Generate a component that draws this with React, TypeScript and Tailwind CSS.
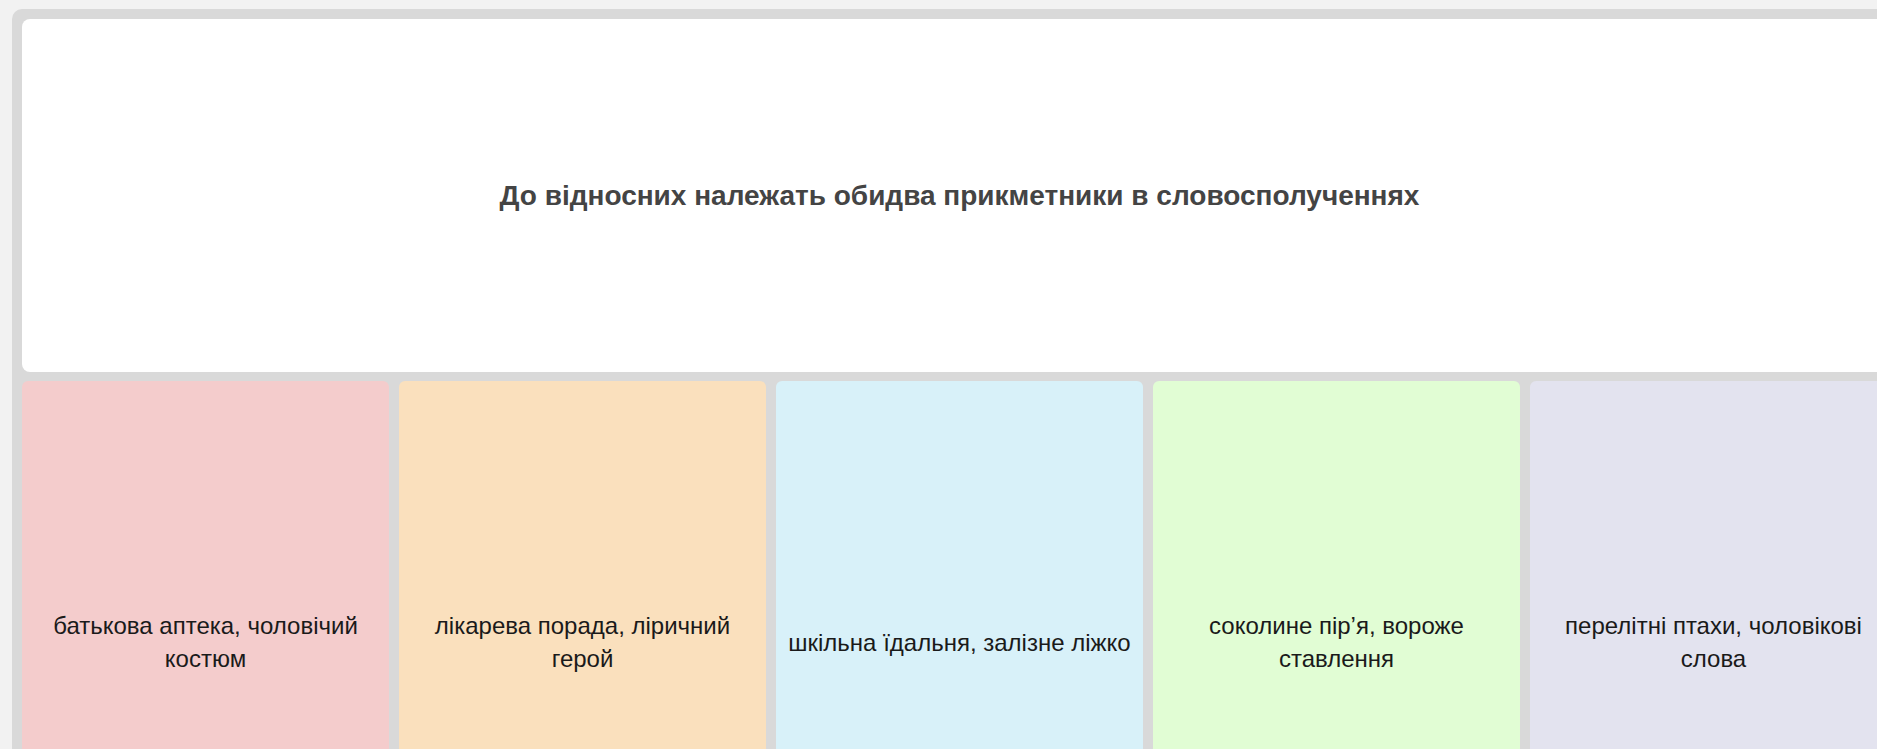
const cards = [
  { text: "батькова аптека, чоловічий костюм", bg: "bg-[#f4cccc]" },
  { text: "лікарева порада, ліричний герой", bg: "bg-[#fae0bd]" },
  { text: "шкільна їдальня, залізне ліжко", bg: "bg-[#d8f1f9]" },
  { text: "соколине пір’я, вороже ставлення", bg: "bg-[#e1fdd4]" },
  { text: "перелітні птахи, чоловікові слова", bg: "bg-[#e3e3ef]" },
];

export default function App() {
  return (
    <div className="min-h-screen w-max bg-[#f2f2f2] pl-[12px] pt-[9px] font-['Liberation_Sans',Arial,sans-serif]">
      <div className="flex w-[1895px] flex-col gap-[9px] rounded-[10px] bg-[#d9d9d9] p-[10px]">
        <div className="flex h-[353px] items-center justify-center rounded-[8px] bg-white px-8">
          <h1 className="text-[28px] font-bold text-[#444444]">
            До відносних належать обидва прикметники в словосполученнях
          </h1>
        </div>
        <div className="flex gap-[10px]">
          {cards.map((c) => (
            <div
              key={c.text}
              className={`flex h-[522px] w-[367px] shrink-0 items-center justify-center rounded-[6px] px-3 text-center text-[24px] leading-[33px] text-[#1a1a1a] ${c.bg}`}
            >
              {c.text}
            </div>
          ))}
        </div>
      </div>
    </div>
  );
}
